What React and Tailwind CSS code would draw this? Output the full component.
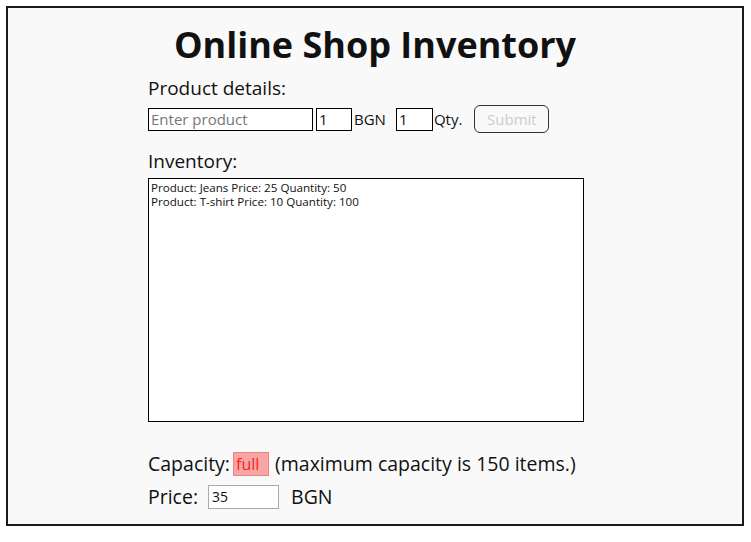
const font = { fontFamily: '"Open Sans", "DejaVu Sans", sans-serif' };

export default function App() {
  return (
    <div className="bg-white p-[6px] w-[751px] h-[542px]" style={font}>
      <div className="h-[520px] w-[738px] border-2 border-[#1a1a1a] bg-[#f9f9f9] text-[#111]">
        <h1 className="text-center text-[36px] font-bold leading-[40px] mt-[17px]">
          Online Shop Inventory
        </h1>
        <div className="pl-[140px]">
          <div className="text-[19px] leading-[24px] mt-[11px]">Product details:</div>
          <div className="flex items-center mt-[5px] h-[28px] text-[15px]">
            <input
              type="text"
              placeholder="Enter product"
              className="w-[165px] h-[23px] border border-black bg-white px-[2px] text-[15px] placeholder:text-[#777] outline-none"
            />
            <input
              type="number"
              defaultValue="1"
              className="ml-[3px] w-[36px] h-[23px] border border-black bg-white px-[2px] text-[15px] outline-none"
            />
            <span className="ml-[2px]">BGN</span>
            <input
              type="number"
              defaultValue="1"
              className="ml-[10px] w-[37px] h-[23px] border border-black bg-white px-[2px] text-[15px] outline-none"
            />
            <span className="ml-[1px]">Qty.</span>
            <button
              disabled
              className="ml-[12px] w-[75px] h-[28px] rounded-[6px] border border-[#333] bg-[#f9f9f9] text-[#ccc] text-[15px]"
            >
              Submit
            </button>
          </div>
          <div className="text-[19px] leading-[24px] mt-[16px]">Inventory:</div>
          <div className="mt-[5px] w-[436px] h-[244px] border border-black bg-white px-[2px] py-[2px] text-[11.6px] leading-[14px]">
            <div>Product: Jeans Price: 25 Quantity: 50</div>
            <div>Product: T-shirt Price: 10 Quantity: 100</div>
          </div>
          <div className="flex items-center mt-[29px] text-[19.5px] leading-[26px]">
            <span>Capacity:</span>
            <span className="ml-[3px] w-[36px] h-[24px] bg-[#f7a6a6] border border-[#f08080] text-[#ff1a1a] text-[16px] leading-[22px] pl-[2px]">
              full
            </span>
            <span className="ml-[6px]">(maximum capacity is 150 items.)</span>
          </div>
          <div className="flex items-center mt-[7px] text-[19.5px] leading-[26px]">
            <span>Price:</span>
            <input
              type="number"
              defaultValue="35"
              className="ml-[10px] w-[71px] h-[24px] border border-[#aaa] bg-white px-[3px] text-[14px] outline-none"
            />
            <span className="ml-[12px]">BGN</span>
          </div>
        </div>
      </div>
    </div>
  );
}
